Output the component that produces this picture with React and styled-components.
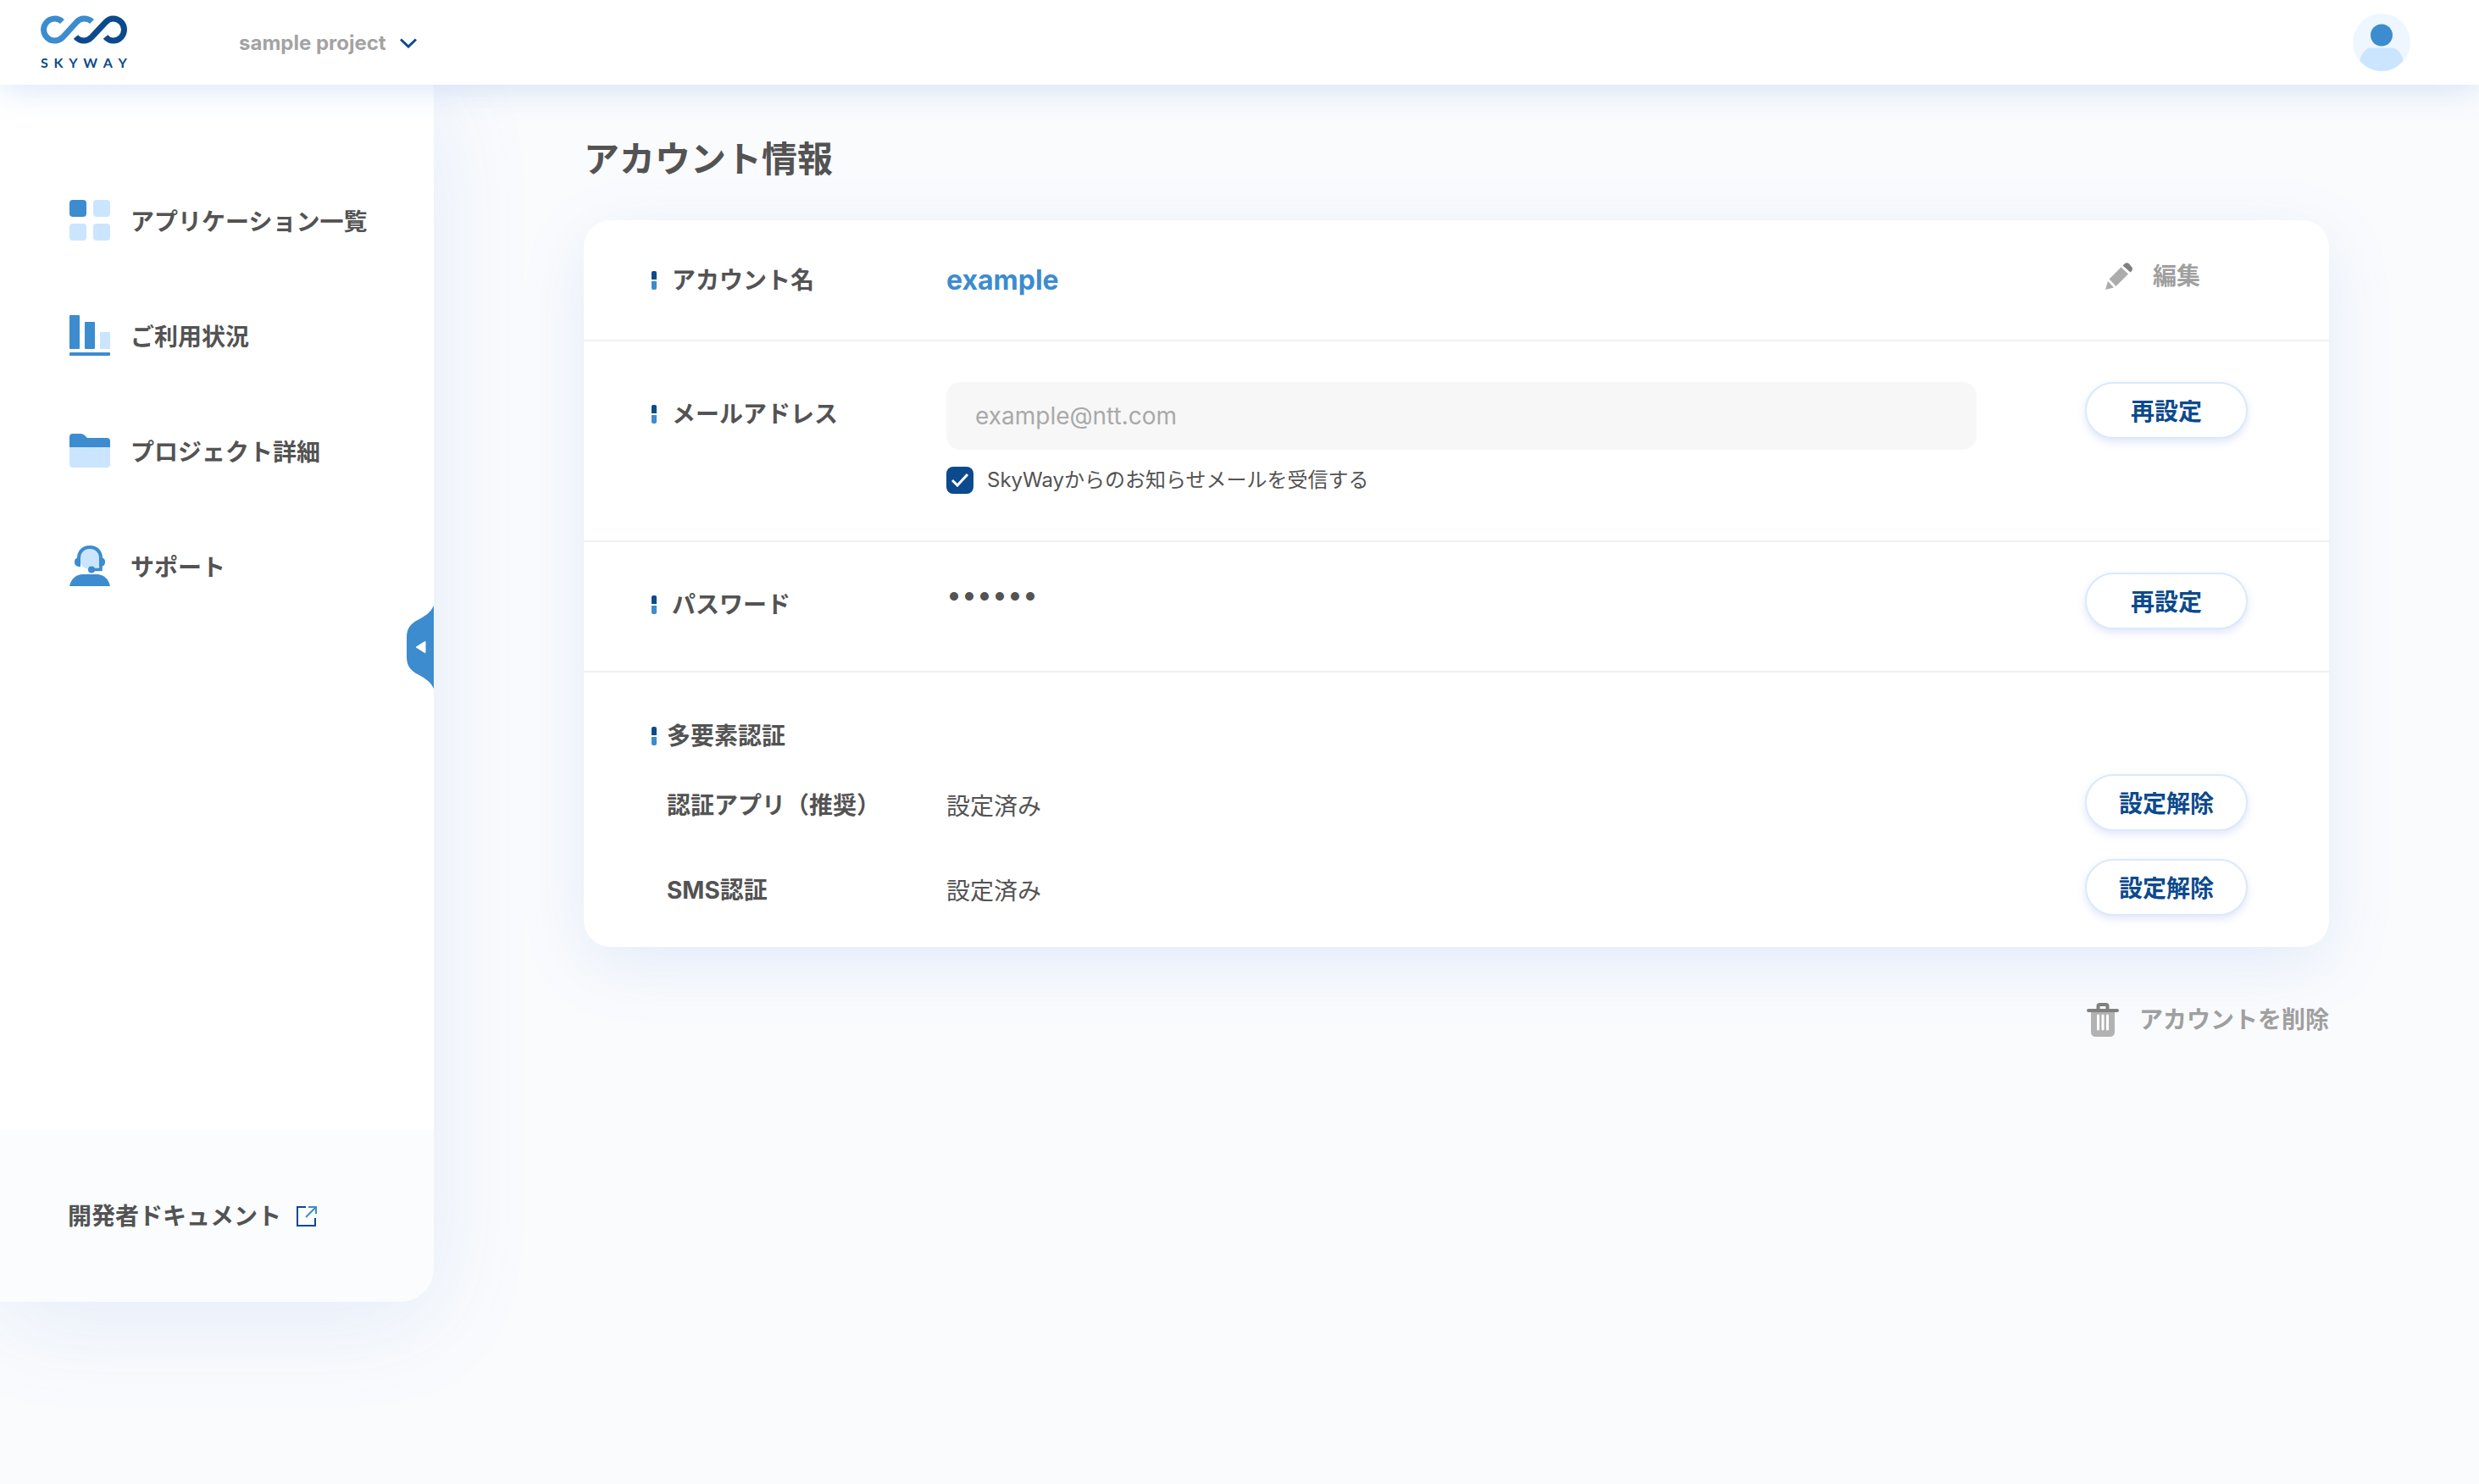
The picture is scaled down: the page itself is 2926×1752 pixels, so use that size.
import React, { useState } from "react";
import styled, { createGlobalStyle } from "styled-components";

const colors = {
  navy: "#0c4a8d",
  blue: "#3c8ccf",
  pale: "#cbe5ff",
  text: "#535353",
  muted: "#a3a3a3",
  line: "#edf0f3",
};

const GlobalStyle = createGlobalStyle`
  *, *::before, *::after {
    box-sizing: border-box;
  }

  body {
    margin: 0;
    background: #fafbfd;
    color: ${colors.text};
    font-family: Inter, "Noto Sans CJK JP", sans-serif;
    font-size: 28px;
    line-height: 40px;
  }

  button, input {
    font: inherit;
    color: inherit;
  }

  button {
    padding: 0;
    border: none;
    background: none;
    cursor: pointer;
  }

  svg {
    display: block;
    flex-shrink: 0;
  }
`;

const Page = styled.div`
  min-height: 100vh;
`;

const Header = styled.header`
  position: relative;
  z-index: 2;
  display: flex;
  align-items: center;
  height: 100px;
  padding: 0 81px 0 48px;
  background: #fff;
  box-shadow: 0 4px 40px rgba(60, 120, 220, 0.2);
`;

const Logo = styled.a`
  display: flex;
  flex-direction: column;
  gap: 14px;
  width: 102px;
  color: ${colors.navy};
  text-decoration: none;
`;

const Wordmark = styled.span`
  display: flex;
  justify-content: space-between;
  font-family: Lato, sans-serif;
  font-size: 16px;
  font-weight: 700;
  line-height: 16px;
`;

const ProjectButton = styled.button`
  display: flex;
  align-items: center;
  gap: 16px;
  margin-left: 132px;
  padding-top: 2px;
  color: ${colors.muted};
  font-size: 24px;
  font-weight: 700;
`;

const Avatar = styled.button`
  margin-left: auto;
`;

const Body = styled.div`
  display: flex;
  align-items: flex-start;
`;

const Sidebar = styled.aside`
  position: relative;
  display: flex;
  flex-direction: column;
  flex-shrink: 0;
  width: 512px;
  border-radius: 0 0 40px 0;
  background: #fff;
  box-shadow: 0 20px 120px rgba(60, 120, 220, 0.12);
`;

const Menu = styled.nav`
  display: flex;
  flex-direction: column;
  gap: 88px;
  padding: 136px 0 642px 82px;
`;

const MenuLink = styled.a`
  display: flex;
  align-items: center;
  gap: 24px;
  height: 48px;
  color: inherit;
  font-weight: 700;
  text-decoration: none;
`;

const MenuText = styled.span`
  padding-top: 4px;
`;

const SidebarFooter = styled.div`
  padding: 82px 0 81px 80px;
  border-radius: 0 0 40px 0;
  background: #fafcfe;
`;

const DocsLink = styled(MenuLink)`
  gap: 18px;
  height: 40px;
`;

const CollapseButton = styled.button`
  position: absolute;
  top: 615px;
  right: 0;
`;

const Main = styled.main`
  flex: 1;
  padding: 56px 177px;
`;

const Title = styled.h1`
  margin: 0 0 40px;
  font-size: 42px;
  font-weight: 700;
  line-height: 64px;
`;

const Card = styled.section`
  border-radius: 32px;
  background: #fff;
  box-shadow: 0 20px 80px rgba(60, 120, 220, 0.12);
`;

const Section = styled.div`
  padding: ${(p) => p.$padding};

  & + & {
    border-top: 2px solid ${colors.line};
  }
`;

const Row = styled.div`
  display: grid;
  grid-template-columns: 348px 1fr 192px;
  align-items: start;
`;

const Label = styled.div`
  display: flex;
  align-items: center;
  gap: ${(p) => (p.$tight ? "12px" : "18px")};
  padding-top: ${(p) => p.$top || 0}px;
  font-weight: 700;

  &::before {
    content: "";
    width: 6px;
    height: 22px;
    border-radius: 2px;
    background: linear-gradient(
      ${colors.navy} 10px,
      #fff 10px,
      #fff 12px,
      ${colors.blue} 12px
    );
  }
`;

const SubRow = styled(Row)`
  margin-top: ${(p) => p.$gap}px;
  align-items: center;
`;

const SubLabel = styled.div`
  padding: 6px 0 0 18px;
  font-weight: 700;
`;

const Status = styled.div`
  padding-top: 8px;
`;

const AccountName = styled.div`
  padding-top: 5px;
  color: ${colors.blue};
  font-size: 32px;
  font-weight: 700;
`;

const Password = styled.div`
  padding-top: 6px;
  font-size: 32px;
`;

const EmailField = styled.div`
  display: flex;
  flex-direction: column;
  gap: 20px;
  padding-right: 128px;
`;

const EmailInput = styled.input`
  width: 100%;
  height: 80px;
  padding: 0 34px;
  border: none;
  border-radius: 16px;
  background: #f7f7f7;

  &::placeholder {
    color: #a9a9a9;
    opacity: 1;
  }
`;

const CheckLabel = styled.label`
  display: flex;
  align-items: center;
  gap: 16px;
  font-size: 24px;
  line-height: 32px;
`;

const Checkbox = styled.input`
  appearance: none;
  width: 32px;
  height: 32px;
  margin: 0;
  border: 2px solid ${colors.navy};
  border-radius: 8px;
  background: #fff;

  &:checked {
    background: ${colors.navy};
  }
`;

const CheckBoxWrap = styled.span`
  display: grid;

  & > * {
    grid-area: 1 / 1;
    place-self: center;
  }

  svg {
    pointer-events: none;
  }
`;

const PillButton = styled.button`
  width: 192px;
  height: 67px;
  padding-top: 2px;
  border: 2px solid #dbe9fa;
  border-radius: 34px;
  background: #fff;
  box-shadow: 0 4px 10px rgba(90, 120, 230, 0.18);
  color: ${colors.navy};
  font-weight: 700;
`;

const IconButton = styled.button`
  display: flex;
  align-items: center;
  gap: 24px;
  color: #9f9f9f;
  font-weight: 700;
`;

const EditButton = styled(IconButton)`
  margin-left: 24px;
`;

const CardFooter = styled.div`
  display: flex;
  justify-content: flex-end;
  padding-top: 66px;
`;

const LogoMark = () => (
  <svg width="102" height="34" viewBox="0 0 102 34" fill="none" strokeWidth="7">
    <path
      d="M25.5 7.5A13 13 0 1 0 16.5 30C20.500 30 23.500 28.500 26 26L42 8.500C44.500 5.500 47.500 4 51 4C55 4 58 5 60.500 7.500"
      stroke={colors.blue}
    />
    <path
      d="M41.500 25.500C44 28.500 47 30 51 30C54.500 30 57.500 28.500 60 26L76.500 8.500C79 5.500 82 4 85.500 4A13 13 0 1 1 85.500 30C82 30 79 28.500 76.500 25.500"
      stroke={colors.navy}
    />
  </svg>
);

const ChevronIcon = () => (
  <svg width="20" height="12" viewBox="0 0 20 12" fill="none">
    <path d="M1 1.500L10 10L19 1.500" stroke={colors.navy} strokeWidth="3" />
  </svg>
);

const AvatarIcon = () => (
  <svg width="68" height="68" viewBox="0 0 68 68">
    <circle cx="34" cy="34" r="34" fill="#eef6ff" />
    <path
      d="M20 40.500H48C54 42.500 58 48 59.500 55.500C53 63.500 44 68 34 68S15 63.500 8.500 55.500C10 48 14 42.500 20 40.500Z"
      fill={colors.pale}
    />
    <circle cx="34" cy="25.500" r="13" fill={colors.blue} />
  </svg>
);

const AppsIcon = () => (
  <svg width="48" height="48" viewBox="0 0 48 48" fill={colors.pale}>
    <rect width="20" height="20" rx="4" fill={colors.blue} />
    <rect x="28" width="20" height="20" rx="4" />
    <rect y="28" width="20" height="20" rx="4" />
    <rect x="28" y="28" width="20" height="20" rx="4" />
  </svg>
);

const UsageIcon = () => (
  <svg width="48" height="48" viewBox="0 0 48 48" fill={colors.blue}>
    <rect width="12" height="40" rx="1" />
    <rect x="18" y="8" width="12" height="32" rx="1" />
    <rect x="36" y="20" width="12" height="20" rx="1" fill={colors.pale} />
    <rect y="44" width="48" height="4" rx="1" />
  </svg>
);

const FolderIcon = () => (
  <svg width="48" height="48" viewBox="0 0 48 48">
    <path
      d="M0 20V8Q0 4 4 4H13Q16 4 18 6L21 9H44Q48 9 48 13V20Z"
      fill={colors.blue}
    />
    <path d="M0 20H48V40Q48 44 44 44H4Q0 44 0 40Z" fill={colors.pale} />
  </svg>
);

const SupportIcon = () => (
  <svg width="48" height="48" viewBox="0 0 48 48" fill={colors.blue}>
    <path d="M12 15Q13 4 24 4T36 15V28H26Q12 28 12 15Z" fill={colors.pale} />
    <path
      d="M11 15C11 7 16.500 2 24 2S37 7 37 15"
      fill="none"
      stroke={colors.blue}
      strokeWidth="4"
    />
    <path d="M13 14V25H11A5.500 5.500 0 0 1 10 14.200Z" />
    <path d="M35 14V25H37A5.500 5.500 0 0 0 38 14.200Z" />
    <path
      d="M37 22V28.500H27"
      fill="none"
      stroke={colors.blue}
      strokeWidth="3.500"
    />
    <circle cx="26" cy="28.500" r="4" />
    <path d="M0 48C2 39 8 34 16 34H32C40 34 46 39 48 48Z" />
  </svg>
);

const ExternalIcon = () => (
  <svg width="24" height="24" viewBox="0 0 24 24" fill="none" strokeWidth="2">
    <path d="M11 1H1V23H22V14" stroke={colors.navy} />
    <path d="M11 13L22 2M14 1H23V9" stroke={colors.blue} />
  </svg>
);

const CollapseIcon = () => (
  <svg width="32" height="98" viewBox="0 0 32 98">
    <path
      d="M32 0C28 9 20 13 13 17C5 21 0 27 0 37V61C0 71 5 77 13 81C20 85 28 89 32 98Z"
      fill={colors.blue}
    />
    <path
      d="M12 49L21.500 43V55Z"
      fill="#fff"
      stroke="#fff"
      strokeWidth="2"
      strokeLinejoin="round"
    />
  </svg>
);

const CheckIcon = () => (
  <svg width="20" height="16" viewBox="0 0 20 16" fill="none">
    <path d="M1 8L7 14L19 1" stroke="#fff" strokeWidth="3" />
  </svg>
);

const PencilIcon = () => (
  <svg width="32" height="32" viewBox="0 0 32 32" fill="#acacac">
    <path
      d="M22 2Q25 -1 28 1.500L31 5Q33 7.500 31 10L29.500 11.500L20.500 3.500Z"
      fill="#808080"
    />
    <path d="M18.500 5.500L27 13.500L12.500 28L4.500 19.500Z" />
    <path d="M3 22L10 29.500L0 32Z" />
  </svg>
);

const TrashIcon = () => (
  <svg width="38" height="40" viewBox="0 0 38 40">
    <path d="M5 11H33V34Q33 40 27 40H11Q5 40 5 34Z" fill="#b2b2b2" />
    <path
      d="M13.500 15V31M19 15V31M24.500 15V31"
      stroke="#fff"
      strokeWidth="3"
      strokeLinecap="round"
    />
    <path
      d="M2 9H36M13.500 8V4Q13.500 2 15.500 2H22.500Q24.500 2 24.500 4V8"
      fill="none"
      stroke="#808080"
      strokeWidth="4"
      strokeLinecap="round"
    />
  </svg>
);

const menuItems = [
  { label: "アプリケーション一覧", Icon: AppsIcon },
  { label: "ご利用状況", Icon: UsageIcon },
  { label: "プロジェクト詳細", Icon: FolderIcon },
  { label: "サポート", Icon: SupportIcon },
];

export default function App() {
  const [receiveMail, setReceiveMail] = useState(true);

  return (
    <Page lang="ja">
      <GlobalStyle />
      <Header>
        <Logo href="#" aria-label="SKYWAY">
          <LogoMark />
          <Wordmark>
            {[..."SKYWAY"].map((letter, i) => (
              <span key={i}>{letter}</span>
            ))}
          </Wordmark>
        </Logo>
        <ProjectButton type="button">
          sample project
          <ChevronIcon />
        </ProjectButton>
        <Avatar type="button" aria-label="アカウント">
          <AvatarIcon />
        </Avatar>
      </Header>
      <Body>
        <Sidebar>
          <Menu>
            {menuItems.map(({ label, Icon }) => (
              <MenuLink href="#" key={label}>
                <Icon />
                <MenuText>{label}</MenuText>
              </MenuLink>
            ))}
          </Menu>
          <SidebarFooter>
            <DocsLink href="#">
              開発者ドキュメント
              <ExternalIcon />
            </DocsLink>
          </SidebarFooter>
          <CollapseButton type="button" aria-label="メニューを閉じる">
            <CollapseIcon />
          </CollapseButton>
        </Sidebar>
        <Main>
          <Title>アカウント情報</Title>
          <Card>
            <Section $padding="46px 96px 50px 80px">
              <Row>
                <Label $top={5}>アカウント名</Label>
                <AccountName>example</AccountName>
                <EditButton type="button">
                  <PencilIcon />
                  編集
                </EditButton>
              </Row>
            </Section>
            <Section $padding="48px 96px 55px 80px">
              <Row>
                <Label as="label" htmlFor="email" $top={18}>
                  メールアドレス
                </Label>
                <EmailField>
                  <EmailInput
                    id="email"
                    type="email"
                    placeholder="example@ntt.com"
                  />
                  <CheckLabel>
                    <CheckBoxWrap>
                      <Checkbox
                        type="checkbox"
                        checked={receiveMail}
                        onChange={(e) => setReceiveMail(e.target.checked)}
                      />
                      <CheckIcon />
                    </CheckBoxWrap>
                    SkyWayからのお知らせメールを受信する
                  </CheckLabel>
                </EmailField>
                <PillButton type="button">再設定</PillButton>
              </Row>
            </Section>
            <Section $padding="36px 96px 49px 80px">
              <Row>
                <Label $top={18}>パスワード</Label>
                <Password>••••••</Password>
                <PillButton type="button">再設定</PillButton>
              </Row>
            </Section>
            <Section $padding="55px 96px 37px 80px">
              <Label $tight>多要素認証</Label>
              <SubRow $gap={25}>
                <SubLabel>認証アプリ（推奨）</SubLabel>
                <Status>設定済み</Status>
                <PillButton type="button">設定解除</PillButton>
              </SubRow>
              <SubRow $gap={33}>
                <SubLabel>SMS認証</SubLabel>
                <Status>設定済み</Status>
                <PillButton type="button">設定解除</PillButton>
              </SubRow>
            </Section>
          </Card>
          <CardFooter>
            <IconButton type="button">
              <TrashIcon />
              アカウントを削除
            </IconButton>
          </CardFooter>
        </Main>
      </Body>
    </Page>
  );
}
